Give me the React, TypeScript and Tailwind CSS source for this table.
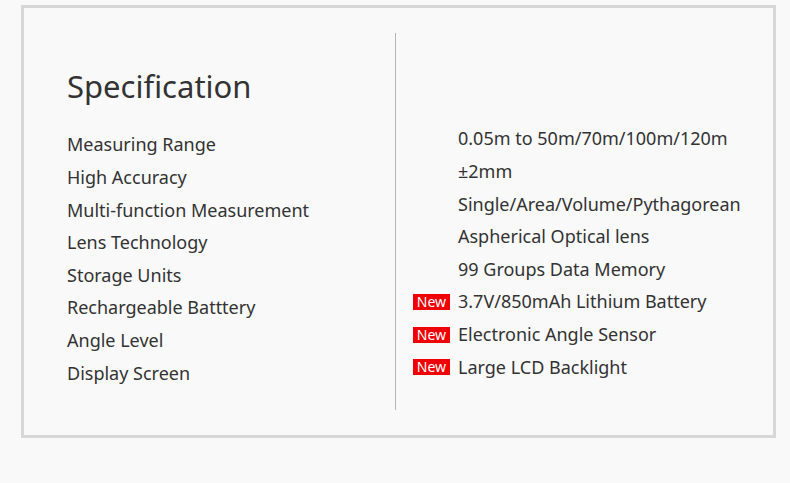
import React from 'react';

type Spec = { label: string; value: string; isNew?: boolean };

const specs: Spec[] = [
  { label: 'Measuring Range', value: '0.05m to 50m/70m/100m/120m' },
  { label: 'High Accuracy', value: '±2mm' },
  { label: 'Multi-function Measurement', value: 'Single/Area/Volume/Pythagorean' },
  { label: 'Lens Technology', value: 'Aspherical Optical lens' },
  { label: 'Storage Units', value: '99 Groups Data Memory' },
  { label: 'Rechargeable Batttery', value: '3.7V/850mAh Lithium Battery', isNew: true },
  { label: 'Angle Level', value: 'Electronic Angle Sensor', isNew: true },
  { label: 'Display Screen', value: 'Large LCD Backlight', isNew: true },
];

const NewBadge: React.FC = () => (
  <span className="flex items-center justify-center w-[37px] h-[16px] bg-[#f00000] text-white text-[14px] leading-none">
    New
  </span>
);

const App: React.FC = () => (
  <div
    className="w-[790px] h-[483px] bg-[#f9f9f9] pt-[5px] pl-[21px] text-[#333]"
    style={{ fontFamily: '"Noto Sans", "Open Sans", sans-serif' }}
  >
    <div className="flex w-[755px] h-[433px] border-[3px] border-[#d7d7d7] bg-[#f9f9f9]">
      <div className="w-[371px] pl-[43px] pt-[58px]">
        <h1 className="text-[31px] leading-[40px] font-normal">Specification</h1>
        <ul className="mt-[22.7px]">
          {specs.map((s) => (
            <li key={s.label} className="h-[32.6px] flex items-center text-[18px]">
              {s.label}
            </li>
          ))}
        </ul>
      </div>
      <div className="flex-1 my-[25px] border-l border-[#b5b5b5] pt-[89.7px]">
        <ul>
          {specs.map((s) => (
            <li key={s.value} className="h-[32.6px] flex items-center text-[18px]">
              <div className="w-[62px] pl-[17px]">{s.isNew && <NewBadge />}</div>
              <span>{s.value}</span>
            </li>
          ))}
        </ul>
      </div>
    </div>
  </div>
);

export default App;
